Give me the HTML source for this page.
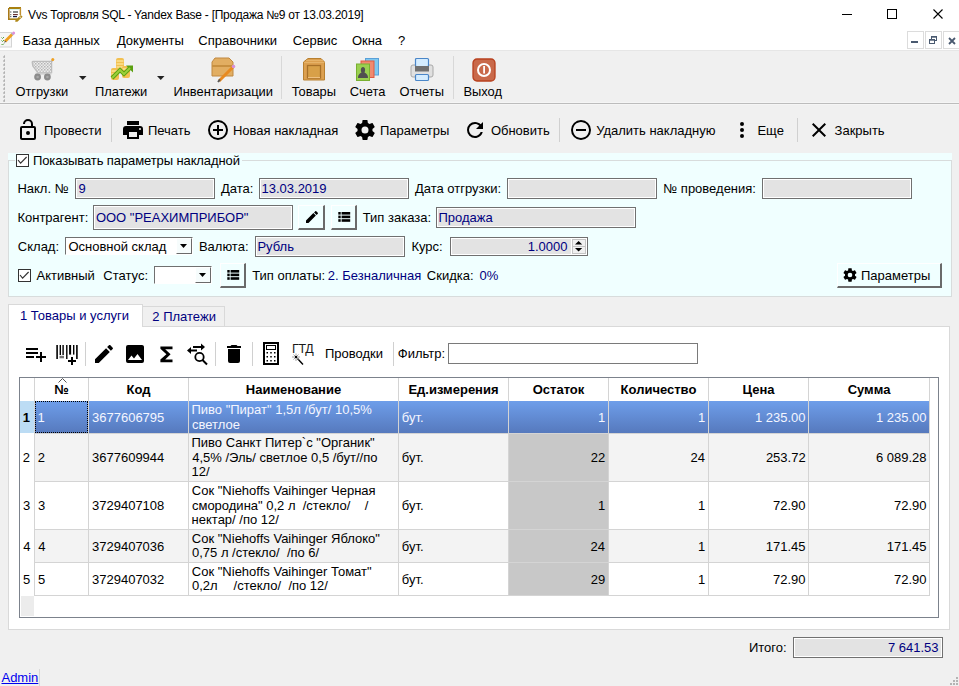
<!DOCTYPE html>
<html><head><meta charset="utf-8">
<style>
*{margin:0;padding:0;box-sizing:border-box}
html,body{width:959px;height:686px;overflow:hidden;background:#f0f0f0;font-family:"Liberation Sans",sans-serif;color:#000}
.a{position:absolute}
.t{position:absolute;white-space:nowrap;line-height:1;font-size:13px}
svg{position:absolute;overflow:visible}
</style></head><body>

<div class="a" style="left:0px;top:0px;width:959px;height:50px;background:#fff;"></div>
<svg style="left:8px;top:7px" width="15" height="15" viewBox="0 0 15 15"><rect x="0" y="0.5" width="13" height="12.5" fill="#fff"/>
<rect x="0" y="1" width="1.6" height="12" fill="#a87818"/>
<rect x="1" y="0" width="12" height="2" fill="#a88010"/>
<rect x="11.6" y="1" width="1.5" height="7" fill="#c09030"/>
<rect x="1" y="11.4" width="8" height="1.6" fill="#a88018"/>
<rect x="1.6" y="2" width="10" height="0.8" fill="#c8f0e8"/>
<rect x="2" y="4" width="1.4" height="2" fill="#aaa"/><rect x="5" y="4" width="5" height="2" fill="#888"/>
<rect x="2" y="7" width="1.4" height="1.2" fill="#888"/><rect x="5" y="7" width="4.8" height="1.2" fill="#6a3030"/>
<rect x="2" y="9" width="1.4" height="1.2" fill="#777"/><rect x="5" y="9" width="4" height="1.2" fill="#101840"/>
<path d="M7.5 13 L12.8 8 L14.6 9.8 L9.4 14.8 L7.2 14.8 Z" fill="#b08818"/>
<rect x="11.5" y="9.6" width="1.2" height="1.2" fill="#fff"/></svg>
<div class="t" style="left:27.947265625px;top:8.84px;font-size:12px;letter-spacing:-0.25px;">Vvs Торговля SQL - Yandex Base - [Продажа №9 от 13.03.2019]</div>
<div class="a" style="left:842px;top:14px;width:10px;height:1px;background:#000;"></div>
<div class="a" style="left:887px;top:9px;width:10px;height:10px;border:1px solid #000;"></div>
<svg style="left:933px;top:9px" width="10" height="10" viewBox="0 0 10 10"><path d="M0.5 0.5 L9.5 9.5 M9.5 0.5 L0.5 9.5" stroke="#000" stroke-width="1.1"/></svg>
<svg style="left:0px;top:28px" width="16" height="22" viewBox="0 0 16 22"><rect x="-0.5" y="4.5" width="12" height="14.5" fill="#f6f6f6" stroke="#d4d4d4"/>
<path d="M1.5 9.5 l1 1 l1.5-1.5 M1.5 12.5 l1 1 l1.5-1.5 M1.5 16 l1 1 l1.5-1.5" stroke="#5aa040" stroke-width="1" fill="none"/>
<path d="M5 13.5 L12 6.5" stroke="#f0a020" stroke-width="2.8"/>
<path d="M4 14.8 L5.2 12.6 L6.3 13.7 Z" fill="#555"/>
<path d="M12 6.5 L13 5.5" stroke="#aab" stroke-width="2.8"/>
<circle cx="13.6" cy="4.9" r="1.5" fill="#e090d8"/></svg>
<div class="t" style="left:22.43359375px;top:33.99px;font-size:13px;">База данных</div>
<div class="t" style="left:116.90478515625px;top:33.99px;font-size:13px;">Документы</div>
<div class="t" style="left:198.33984375px;top:33.99px;font-size:13px;">Справочники</div>
<div class="t" style="left:292.83984375px;top:33.99px;font-size:13px;">Сервис</div>
<div class="t" style="left:351.88427734375px;top:33.99px;font-size:13px;">Окна</div>
<div class="t" style="left:397.966796875px;top:33.99px;font-size:13px;">?</div>
<div class="a" style="left:907px;top:31px;width:17px;height:18px;background:#fff;border:1px solid #dcdcdc;"></div>
<div class="a" style="left:925px;top:31px;width:17px;height:18px;background:#fff;border:1px solid #dcdcdc;"></div>
<div class="a" style="left:943px;top:31px;width:17px;height:18px;background:#fff;border:1px solid #dcdcdc;"></div>
<svg style="left:911px;top:41px" width="8" height="3" viewBox="0 0 8 3"><rect x="0" y="0" width="7" height="2" fill="#4a5a70"/></svg>
<svg style="left:929px;top:36px" width="9" height="9" viewBox="0 0 9 9"><rect x="2.5" y="0.5" width="5" height="4" fill="none" stroke="#4a5a70"/><rect x="0.5" y="3.5" width="5" height="4" fill="#fff" stroke="#4a5a70"/><rect x="0.5" y="3.5" width="5" height="1.2" fill="#4a5a70"/><rect x="2.5" y="0.5" width="5" height="1.2" fill="#4a5a70"/></svg>
<svg style="left:948px;top:37px" width="8" height="8" viewBox="0 0 8 8"><path d="M1 1 L7 7 M7 1 L1 7" stroke="#4a5a70" stroke-width="1.8"/></svg>
<div class="a" style="left:0px;top:50px;width:959px;height:1px;background:#e6e6e6;"></div>
<div class="a" style="left:0px;top:51px;width:959px;height:52px;background:#f0f0f0;"></div>
<div class="a" style="left:0px;top:102px;width:959px;height:3px;background:#f5f5f5;"></div>
<div class="a" style="left:0px;top:103px;width:959px;height:1px;background:#bcbcbc;"></div>
<svg style="left:2px;top:55px" width="4" height="48" viewBox="0 0 4 48"><rect x="2" y="0.5" width="1" height="1" fill="#c8c8c8"/><rect x="1" y="1.5" width="2" height="1" fill="#a0a0a0"/><rect x="2" y="0.5" width="1" height="2" fill="#b0b0b0"/><rect x="2" y="4.5" width="1" height="1" fill="#c8c8c8"/><rect x="1" y="5.5" width="2" height="1" fill="#a0a0a0"/><rect x="2" y="4.5" width="1" height="2" fill="#b0b0b0"/><rect x="2" y="8.5" width="1" height="1" fill="#c8c8c8"/><rect x="1" y="9.5" width="2" height="1" fill="#a0a0a0"/><rect x="2" y="8.5" width="1" height="2" fill="#b0b0b0"/><rect x="2" y="12.5" width="1" height="1" fill="#c8c8c8"/><rect x="1" y="13.5" width="2" height="1" fill="#a0a0a0"/><rect x="2" y="12.5" width="1" height="2" fill="#b0b0b0"/><rect x="2" y="16.5" width="1" height="1" fill="#c8c8c8"/><rect x="1" y="17.5" width="2" height="1" fill="#a0a0a0"/><rect x="2" y="16.5" width="1" height="2" fill="#b0b0b0"/><rect x="2" y="20.5" width="1" height="1" fill="#c8c8c8"/><rect x="1" y="21.5" width="2" height="1" fill="#a0a0a0"/><rect x="2" y="20.5" width="1" height="2" fill="#b0b0b0"/><rect x="2" y="24.5" width="1" height="1" fill="#c8c8c8"/><rect x="1" y="25.5" width="2" height="1" fill="#a0a0a0"/><rect x="2" y="24.5" width="1" height="2" fill="#b0b0b0"/><rect x="2" y="28.5" width="1" height="1" fill="#c8c8c8"/><rect x="1" y="29.5" width="2" height="1" fill="#a0a0a0"/><rect x="2" y="28.5" width="1" height="2" fill="#b0b0b0"/><rect x="2" y="32.5" width="1" height="1" fill="#c8c8c8"/><rect x="1" y="33.5" width="2" height="1" fill="#a0a0a0"/><rect x="2" y="32.5" width="1" height="2" fill="#b0b0b0"/><rect x="2" y="36.5" width="1" height="1" fill="#c8c8c8"/><rect x="1" y="37.5" width="2" height="1" fill="#a0a0a0"/><rect x="2" y="36.5" width="1" height="2" fill="#b0b0b0"/><rect x="2" y="40.5" width="1" height="1" fill="#c8c8c8"/><rect x="1" y="41.5" width="2" height="1" fill="#a0a0a0"/><rect x="2" y="40.5" width="1" height="2" fill="#b0b0b0"/><rect x="2" y="44.5" width="1" height="1" fill="#c8c8c8"/><rect x="1" y="45.5" width="2" height="1" fill="#a0a0a0"/><rect x="2" y="44.5" width="1" height="2" fill="#b0b0b0"/></svg>
<div class="a" style="left:281px;top:56px;width:1px;height:43px;background:#d8d8d8;"></div>
<div class="a" style="left:453px;top:56px;width:1px;height:43px;background:#d8d8d8;"></div>
<svg style="left:26px;top:54px" width="36" height="30" viewBox="0 0 36 30"><defs><pattern id="chk" width="3" height="3" patternUnits="userSpaceOnUse"><rect width="3" height="3" fill="#ececec"/><rect width="1.5" height="1.5" fill="#b4b4b4"/><rect x="1.5" y="1.5" width="1.5" height="1.5" fill="#c4c4c4"/></pattern></defs>
<path d="M6.2 8.2 Q6.2 7.4 7.2 7.4 H25.6 V18.6 H11.8 L6.8 12 Z" fill="url(#chk)" stroke="#bcbcbc" stroke-width="1.3"/>
<path d="M25.6 7.6 L26.6 5.6" stroke="#b0b0b0" stroke-width="1.4"/>
<circle cx="26.8" cy="5.4" r="1.5" fill="#f0a020"/>
<rect x="9.5" y="18.6" width="16" height="2" fill="#cfcfcf"/>
<circle cx="11.6" cy="23" r="3.4" fill="#8c8c8c"/><circle cx="21.4" cy="23" r="3.4" fill="#8c8c8c"/>
<circle cx="11.6" cy="23" r="1.3" fill="#a8a8a8"/><circle cx="21.4" cy="23" r="1.3" fill="#a8a8a8"/></svg>
<svg style="left:79px;top:76px" width="8" height="4" viewBox="0 0 8 4"><path d="M0 0 H7.5 L3.75 4 Z" fill="#222"/></svg>
<svg style="left:108px;top:56px" width="26" height="26" viewBox="0 0 26 26"><rect x="8" y="2" width="8" height="12" rx="2" fill="#f2c050"/>
<path d="M8.5 5 H15.5 M8.5 8 H15.5 M8.5 11 H15.5" stroke="#fff2b0" stroke-width="1"/>
<rect x="3" y="12" width="8" height="12" rx="2" fill="#f2c050"/>
<path d="M3.5 15 H10.5 M3.5 18 H10.5" stroke="#fff2b0" stroke-width="1"/>
<rect x="14" y="10" width="8" height="12" rx="2" fill="#f2c050"/>
<path d="M14.5 13 H21.5" stroke="#fff2b0" stroke-width="1"/>
<path d="M4 22 L12 14 L16 18 L22 12" stroke="#5aa010" stroke-width="4" fill="none" stroke-linejoin="miter"/>
<path d="M18 9.5 H25 V16.5 Z" fill="#5aa010"/>
<path d="M4 22 L12 14 L16 18 L22 12" stroke="#9cd03a" stroke-width="2" fill="none"/></svg>
<svg style="left:157px;top:76px" width="8" height="4" viewBox="0 0 8 4"><path d="M0 0 H7.5 L3.75 4 Z" fill="#222"/></svg>
<svg style="left:210px;top:56px" width="26" height="26" viewBox="0 0 26 26"><path d="M5 2 H19 L23 6 V20 H2 V6 Z" fill="#e2ae62" stroke="#c08840" stroke-width="1"/>
<rect x="2" y="9" width="21" height="2" fill="#c89040"/>
<path d="M9 25 L23 11" stroke="#e88a20" stroke-width="3"/>
<path d="M8 26 L10 23.5" stroke="#555" stroke-width="2"/>
<circle cx="23.5" cy="10.5" r="1.8" fill="#d890d8"/></svg>
<svg style="left:302px;top:56px" width="26" height="26" viewBox="0 0 26 26"><path d="M6 2.5 H19 L22.5 6 V24 H1.5 V6 Z" fill="#dca050" stroke="#b88030" stroke-width="1"/>
<path d="M4 4.5 H21 M2 6.5 H22.5" stroke="#e8b870" stroke-width="0.8"/>
<rect x="5.5" y="9.5" width="13" height="12.5" fill="#d8a048" stroke="#a87028" stroke-width="1.3"/>
<path d="M6 21.5 H18" stroke="#eec080" stroke-width="1"/></svg>
<svg style="left:355px;top:56px" width="26" height="26" viewBox="0 0 26 26"><rect x="10.5" y="2.5" width="13" height="16.5" fill="#7ec8f0" stroke="#5aa0d8"/>
<rect x="6" y="5" width="13" height="16.5" fill="#f08a70" stroke="#e05a40"/>
<rect x="1.5" y="8" width="13" height="16.5" fill="#9ad050" stroke="#78b030"/>
<path d="M8 11 C5.5 11 5.5 15 6.5 16.5 C4 18 3 19 3 22 H13 C13 19 12 18 9.5 16.5 C10.5 15 10.5 11 8 11 Z" fill="#505050"/></svg>
<svg style="left:408px;top:56px" width="26" height="26" viewBox="0 0 26 26"><rect x="3" y="9" width="22" height="12" rx="2" fill="#e0e0e0" stroke="#a8a8a8"/>
<rect x="7.5" y="2.5" width="13" height="8" rx="1" fill="#d4ecff" stroke="#4a86c8" stroke-width="1.2"/>
<rect x="7" y="10" width="14" height="5.5" fill="#707070"/>
<rect x="7.5" y="18.5" width="13" height="6" rx="1" fill="#d4ecff" stroke="#4a86c8" stroke-width="1.2"/></svg>
<svg style="left:472px;top:58px" width="24" height="24" viewBox="0 0 24 24"><rect x="1" y="1" width="22" height="22" rx="4" fill="#c9694a" stroke="#b8401e" stroke-width="1.3"/>
<circle cx="12" cy="12" r="6" fill="none" stroke="#fff" stroke-width="2"/>
<rect x="11.2" y="8" width="1.8" height="7.5" fill="#fff"/></svg>
<div class="t" style="left:15.389013671875px;top:85.58px;font-size:12.9px;">Отгрузки</div>
<div class="t" style="left:94.95439453125px;top:85.58px;font-size:12.9px;">Платежи</div>
<div class="t" style="left:173.441796875px;top:85.58px;font-size:12.9px;">Инвентаризации</div>
<div class="t" style="left:291.71025390625px;top:85.58px;font-size:12.9px;">Товары</div>
<div class="t" style="left:349.844921875px;top:85.58px;font-size:12.9px;">Счета</div>
<div class="t" style="left:399.389013671875px;top:85.58px;font-size:12.9px;">Отчеты</div>
<div class="t" style="left:463.441796875px;top:85.58px;font-size:12.9px;">Выход</div>
<div class="a" style="left:111px;top:118px;width:1px;height:24px;background:#d0d0d0;"></div>
<div class="a" style="left:559px;top:118px;width:1px;height:24px;background:#d0d0d0;"></div>
<div class="a" style="left:797px;top:118px;width:1px;height:24px;background:#d0d0d0;"></div>
<svg style="left:16px;top:118px" width="24" height="24" viewBox="0 0 24 24"><path fill="#000" d="M18,20V10H6V20H18M18,8A2,2 0 0,1 20,10V20A2,2 0 0,1 18,22H6C4.89,22 4,21.1 4,20V10A2,2 0 0,1 6,8H15V6A3,3 0 0,0 12,3A3,3 0 0,0 9,6H7A5,5 0 0,1 12,1A5,5 0 0,1 17,6V8H18M12,17A2,2 0 0,1 10,15A2,2 0 0,1 12,13A2,2 0 0,1 14,15A2,2 0 0,1 12,17Z"/></svg>
<svg style="left:121px;top:118px" width="24" height="24" viewBox="0 0 24 24"><path fill="#000" d="M18,3H6V7H18M19,12A1,1 0 0,1 18,11A1,1 0 0,1 19,10A1,1 0 0,1 20,11A1,1 0 0,1 19,12M16,19H8V14H16M19,8H5A3,3 0 0,0 2,11V17H6V21H18V17H22V11A3,3 0 0,0 19,8Z"/></svg>
<svg style="left:206px;top:118px" width="24" height="24" viewBox="0 0 24 24"><path fill="#000" d="M12,20C7.59,20 4,16.41 4,12C4,7.59 7.59,4 12,4C16.41,4 20,7.59 20,12C20,16.41 16.41,20 12,20M12,2A10,10 0 0,0 2,12A10,10 0 0,0 12,22A10,10 0 0,0 22,12A10,10 0 0,0 12,2M13,7H11V11H7V13H11V17H13V13H17V11H13V7Z"/></svg>
<svg style="left:353px;top:118px" width="24" height="24" viewBox="0 0 24 24"><path fill="#000" d="M12,15.5A3.5,3.5 0 0,1 8.5,12A3.5,3.5 0 0,1 12,8.5A3.5,3.5 0 0,1 15.5,12A3.5,3.5 0 0,1 12,15.5M19.43,12.97C19.47,12.65 19.5,12.33 19.5,12C19.5,11.67 19.47,11.34 19.43,11L21.54,9.37C21.73,9.22 21.78,8.95 21.66,8.73L19.66,5.27C19.54,5.05 19.27,4.96 19.05,5.05L16.56,6.05C16.04,5.66 15.5,5.32 14.87,5.07L14.5,2.42C14.46,2.18 14.25,2 14,2H10C9.75,2 9.54,2.18 9.5,2.42L9.13,5.07C8.5,5.32 7.96,5.66 7.440,6.05L4.95,5.05C4.73,4.96 4.46,5.05 4.34,5.27L2.34,8.73C2.21,8.95 2.27,9.22 2.46,9.37L4.57,11C4.53,11.34 4.5,11.67 4.5,12C4.5,12.33 4.53,12.65 4.57,12.97L2.46,14.63C2.27,14.78 2.21,15.05 2.34,15.27L4.34,18.73C4.46,18.95 4.73,19.03 4.95,18.95L7.44,17.94C7.96,18.34 8.5,18.68 9.13,18.93L9.5,21.58C9.54,21.82 9.75,22 10,22H14C14.25,22 14.46,21.82 14.5,21.58L14.87,18.93C15.5,18.67 16.04,18.34 16.56,17.94L19.05,18.95C19.27,19.03 19.54,18.95 19.66,18.73L21.66,15.27C21.78,15.05 21.73,14.78 21.54,14.63L19.43,12.97Z"/></svg>
<svg style="left:463px;top:118px" width="24" height="24" viewBox="0 0 24 24"><path fill="#000" d="M17.65,6.35C16.2,4.9 14.21,4 12,4A8,8 0 0,0 4,12A8,8 0 0,0 12,20C15.73,20 18.84,17.45 19.73,14H17.65C16.83,16.33 14.61,18 12,18A6,6 0 0,1 6,12A6,6 0 0,1 12,6C13.66,6 15.14,6.690 16.22,7.78L13,11H20V4L17.65,6.35Z"/></svg>
<svg style="left:568.5px;top:118px" width="24" height="24" viewBox="0 0 24 24"><path fill="#000" d="M12,20C7.59,20 4,16.41 4,12C4,7.59 7.59,4 12,4C16.41,4 20,7.59 20,12C20,16.41 16.41,20 12,20M12,2A10,10 0 0,0 2,12A10,10 0 0,0 12,22A10,10 0 0,0 22,12A10,10 0 0,0 12,2M7,13H17V11H7"/></svg>
<svg style="left:730px;top:118px" width="24" height="24" viewBox="0 0 24 24"><path fill="#000" d="M12,16A2,2 0 0,1 14,18A2,2 0 0,1 12,20A2,2 0 0,1 10,18A2,2 0 0,1 12,16M12,10A2,2 0 0,1 14,12A2,2 0 0,1 12,14A2,2 0 0,1 10,12A2,2 0 0,1 12,10M12,4A2,2 0 0,1 14,6A2,2 0 0,1 12,8A2,2 0 0,1 10,6A2,2 0 0,1 12,4Z"/></svg>
<svg style="left:807px;top:118px" width="24" height="24" viewBox="0 0 24 24"><path fill="#000" d="M19,6.41L17.59,5L12,10.59L6.41,5L5,6.41L10.59,12L5,17.59L6.41,19L12,13.41L17.59,19L19,17.59L13.41,12L19,6.41Z"/></svg>
<div class="t" style="left:43.9462890625px;top:123.99px;font-size:13px;">Провести</div>
<div class="t" style="left:147.9462890625px;top:123.99px;font-size:13px;">Печать</div>
<div class="t" style="left:232.93359375px;top:123.99px;font-size:13px;">Новая накладная</div>
<div class="t" style="left:379.9462890625px;top:123.99px;font-size:13px;">Параметры</div>
<div class="t" style="left:490.88427734375px;top:123.99px;font-size:13px;">Обновить</div>
<div class="t" style="left:596.15087890625px;top:123.99px;font-size:13px;">Удалить накладную</div>
<div class="t" style="left:757.43359375px;top:123.99px;font-size:13px;">Еще</div>
<div class="t" style="left:834.57470703125px;top:123.99px;font-size:13px;">Закрыть</div>
<div class="a" style="left:8px;top:153px;width:944px;height:144px;background:#f0ffff;"></div>
<div class="a" style="left:8px;top:160px;width:944px;height:137px;border:1px solid #d8dcdc;"></div>
<div class="a" style="left:15px;top:158px;width:227px;height:4px;background:#f0ffff;"></div>
<div class="a" style="left:16px;top:154px;width:13px;height:13px;background:#fff;border:1px solid #333;"></div>
<svg style="left:16px;top:154px" width="13" height="13" viewBox="0 0 13 13"><path d="M2 6 L4.6 9.2 L10.6 3" stroke="#333" stroke-width="1.15" fill="none"/></svg>
<div class="t" style="left:32.9462890625px;top:153.99px;font-size:13px;letter-spacing:-0.1px;">Показывать параметры накладной</div>
<div class="t" style="left:17.43359375px;top:181.99px;font-size:13px;">Накл. №</div>
<div class="a" style="left:75px;top:178px;width:140px;height:21px;background:#e3e3e3;border:1px solid #707070;box-shadow:inset 1px 1px 0 #fff, inset -1px -1px 0 #fff;"></div>
<div class="t" style="left:78.390625px;top:181.99px;font-size:13px;color:#000080;">9</div>
<div class="t" style="left:220.90478515625px;top:181.99px;font-size:13px;">Дата:</div>
<div class="a" style="left:259px;top:178px;width:150px;height:21px;background:#e3e3e3;border:1px solid #707070;box-shadow:inset 1px 1px 0 #fff, inset -1px -1px 0 #fff;"></div>
<div class="t" style="left:261.509765625px;top:181.99px;font-size:13px;color:#000080;">13.03.2019</div>
<div class="t" style="left:414.90478515625px;top:181.99px;font-size:13px;">Дата отгрузки:</div>
<div class="a" style="left:507px;top:178px;width:150px;height:21px;background:#e3e3e3;border:1px solid #707070;box-shadow:inset 1px 1px 0 #fff, inset -1px -1px 0 #fff;"></div>
<div class="t" style="left:663.306640625px;top:181.99px;font-size:13px;">№ проведения:</div>
<div class="a" style="left:762px;top:178px;width:150px;height:21px;background:#e3e3e3;border:1px solid #707070;box-shadow:inset 1px 1px 0 #fff, inset -1px -1px 0 #fff;"></div>
<div class="t" style="left:17.43359375px;top:210.99px;font-size:13px;">Контрагент:</div>
<div class="a" style="left:93px;top:205px;width:200px;height:25px;background:#e3e3e3;border:1px solid #707070;box-shadow:inset 1px 1px 0 #fff, inset -1px -1px 0 #fff;"></div>
<div class="t" style="left:95.88427734375px;top:210.99px;font-size:13px;color:#000080;">ООО "РЕАХИМПРИБОР"</div>
<div class="a" style="left:298px;top:205px;width:27px;height:25px;background:#f0ffff;border-top:1px solid #fff;border-left:1px solid #fff;border-right:2px solid #6a6a6a;border-bottom:2px solid #6a6a6a;"></div>
<div class="a" style="left:331px;top:205px;width:26px;height:25px;background:#f0ffff;border-top:1px solid #fff;border-left:1px solid #fff;border-right:2px solid #6a6a6a;border-bottom:2px solid #6a6a6a;"></div>
<svg style="left:304px;top:209px" width="16" height="16" viewBox="0 0 24 24"><path d="M20.71,7.04C21.1,6.65 21.1,6 20.71,5.63L18.37,3.29C18,2.9 17.35,2.9 16.96,3.29L15.12,5.12L18.87,8.870M3,17.25V21H6.75L17.81,9.93L14.06,6.18L3,17.25Z"/></svg>
<svg style="left:338px;top:212px" width="13" height="11" viewBox="0 0 13 11"><rect x="0.3" y="0" width="2.4" height="2.6"/><rect x="3.6" y="0" width="8.6" height="2.6"/><rect x="0.3" y="3.6" width="2.4" height="2.6"/><rect x="3.6" y="3.6" width="8.6" height="2.6"/><rect x="0.3" y="7.2" width="2.4" height="2.6"/><rect x="3.6" y="7.2" width="8.6" height="2.6"/></svg>
<div class="t" style="left:362.7080078125px;top:210.99px;font-size:13px;">Тип заказа:</div>
<div class="a" style="left:436px;top:207px;width:200px;height:21px;background:#e3e3e3;border:1px solid #707070;box-shadow:inset 1px 1px 0 #fff, inset -1px -1px 0 #fff;"></div>
<div class="t" style="left:438.4462890625px;top:210.99px;font-size:13px;color:#000080;">Продажа</div>
<div class="t" style="left:17.83984375px;top:239.99px;font-size:13px;">Склад:</div>
<div class="a" style="left:65px;top:237px;width:128px;height:18px;background:#fff;border-top:1px solid #707070;border-left:1px solid #707070;border-bottom:1px solid #fff;border-right:1px solid #fff;"></div>
<div class="a" style="left:176px;top:238px;width:16px;height:16px;background:#f6fcfc;border-top:1px solid #fff;border-left:1px solid #fff;border-right:1px solid #6a6a6a;border-bottom:1px solid #6a6a6a;"></div>
<svg style="left:180px;top:244px" width="8" height="4" viewBox="0 0 8 4"><path d="M0 0 H7 L3.5 4 Z" fill="#000"/></svg>
<div class="t" style="left:68.38427734375px;top:239.99px;font-size:13px;">Основной склад</div>
<div class="t" style="left:198.93359375px;top:239.99px;font-size:13px;">Валюта:</div>
<div class="a" style="left:255px;top:236px;width:150px;height:21px;background:#e3e3e3;border:1px solid #707070;box-shadow:inset 1px 1px 0 #fff, inset -1px -1px 0 #fff;"></div>
<div class="t" style="left:257.43359375px;top:239.99px;font-size:13px;color:#000080;">Рубль</div>
<div class="t" style="left:411.43359375px;top:239.99px;font-size:13px;">Курс:</div>
<div class="a" style="left:450px;top:237px;width:138px;height:19px;background:#e3e3e3;border:1px solid #707070;box-shadow:inset 1px 1px 0 #fff, inset -1px -1px 0 #fff;"></div>
<div class="t" style="right:391.4921875px;top:239.99px;font-size:13px;color:#000080;">1.0000</div>
<div class="a" style="left:571px;top:238px;width:16px;height:17px;background:#fff;"></div>
<div class="a" style="left:572px;top:239px;width:14px;height:8px;background:#f0f0f0;border:1px solid #c4c4c4;"></div>
<div class="a" style="left:572px;top:246px;width:14px;height:8px;background:#f0f0f0;border:1px solid #c4c4c4;"></div>
<svg style="left:575px;top:241px" width="8" height="12" viewBox="0 0 8 12"><path d="M0 3.6 L3.6 0 L7.2 3.6 Z M0 7 L3.6 10.4 L7.2 7 Z" fill="#000"/></svg>
<div class="a" style="left:18px;top:269px;width:13px;height:13px;background:#fff;border:1px solid #333;"></div>
<svg style="left:18px;top:269px" width="13" height="13" viewBox="0 0 13 13"><path d="M2 6 L4.6 9.2 L10.6 3" stroke="#333" stroke-width="1.15" fill="none"/></svg>
<div class="t" style="left:36.474609375px;top:268.99px;font-size:13px;">Активный</div>
<div class="t" style="left:103.33984375px;top:268.99px;font-size:13px;">Статус:</div>
<div class="a" style="left:154px;top:266px;width:58px;height:18px;background:#fff;border-top:1px solid #707070;border-left:1px solid #707070;border-bottom:1px solid #fff;border-right:1px solid #fff;"></div>
<div class="a" style="left:195px;top:267px;width:16px;height:16px;background:#f6fcfc;border-top:1px solid #fff;border-left:1px solid #fff;border-right:1px solid #6a6a6a;border-bottom:1px solid #6a6a6a;"></div>
<svg style="left:199px;top:273px" width="8" height="4" viewBox="0 0 8 4"><path d="M0 0 H7 L3.5 4 Z" fill="#000"/></svg>
<div class="a" style="left:220px;top:263px;width:26px;height:25px;background:#f0ffff;border-top:1px solid #fff;border-left:1px solid #fff;border-right:2px solid #6a6a6a;border-bottom:2px solid #6a6a6a;"></div>
<svg style="left:227px;top:270px" width="13" height="11" viewBox="0 0 13 11"><rect x="0.3" y="0" width="2.4" height="2.6"/><rect x="3.6" y="0" width="8.6" height="2.6"/><rect x="0.3" y="3.6" width="2.4" height="2.6"/><rect x="3.6" y="3.6" width="8.6" height="2.6"/><rect x="0.3" y="7.2" width="2.4" height="2.6"/><rect x="3.6" y="7.2" width="8.6" height="2.6"/></svg>
<div class="t" style="left:252.2080078125px;top:268.99px;font-size:13px;">Тип оплаты:</div>
<div class="t" style="left:327.84619140625px;top:268.99px;font-size:13px;color:#000080;">2. Безналичная</div>
<div class="t" style="left:426.83984375px;top:268.99px;font-size:13px;">Скидка:</div>
<div class="t" style="left:479.4921875px;top:268.99px;font-size:13px;color:#000080;">0%</div>
<div class="a" style="left:837px;top:263px;width:105px;height:25px;background:#f0ffff;border-top:1px solid #fff;border-left:1px solid #fff;border-right:2px solid #6a6a6a;border-bottom:2px solid #6a6a6a;"></div>
<svg style="left:842px;top:267px" width="16" height="16" viewBox="0 0 24 24"><path d="M12,15.5A3.5,3.5 0 0,1 8.5,12A3.5,3.5 0 0,1 12,8.5A3.5,3.5 0 0,1 15.5,12A3.5,3.5 0 0,1 12,15.5M19.43,12.97C19.47,12.65 19.5,12.33 19.5,12C19.5,11.67 19.47,11.34 19.43,11L21.54,9.37C21.73,9.22 21.78,8.95 21.66,8.73L19.66,5.27C19.54,5.05 19.27,4.96 19.05,5.05L16.56,6.05C16.04,5.66 15.5,5.32 14.87,5.07L14.5,2.42C14.46,2.18 14.25,2 14,2H10C9.75,2 9.54,2.18 9.5,2.42L9.13,5.07C8.5,5.32 7.96,5.66 7.440,6.05L4.95,5.05C4.73,4.96 4.46,5.05 4.34,5.27L2.34,8.73C2.21,8.95 2.27,9.22 2.46,9.37L4.57,11C4.53,11.34 4.5,11.67 4.5,12C4.5,12.33 4.53,12.65 4.57,12.97L2.46,14.63C2.27,14.78 2.21,15.05 2.34,15.27L4.34,18.73C4.46,18.95 4.73,19.03 4.95,18.95L7.44,17.94C7.96,18.34 8.5,18.68 9.13,18.93L9.5,21.58C9.54,21.82 9.75,22 10,22H14C14.25,22 14.46,21.82 14.5,21.58L14.87,18.93C15.5,18.67 16.04,18.34 16.56,17.94L19.05,18.95C19.27,19.03 19.54,18.95 19.66,18.73L21.66,15.27C21.78,15.05 21.73,14.78 21.54,14.63L19.43,12.97Z"/></svg>
<div class="t" style="left:860.9462890625px;top:268.99px;font-size:13px;">Параметры</div>
<div class="a" style="left:8px;top:326px;width:942px;height:304px;background:#fff;border:1px solid #d9d9d9;"></div>
<div class="a" style="left:8px;top:304px;width:135px;height:23px;background:#fff;border:1px solid #d9d9d9;border-bottom:none;"></div>
<div class="a" style="left:142px;top:306px;width:83px;height:21px;background:#f0f0f0;border:1px solid #d9d9d9;"></div>
<div class="a" style="left:9px;top:326px;width:133px;height:1px;background:#fff;"></div>
<div class="t" style="left:20.009765625px;top:309.49px;font-size:13px;color:#000080;">1 Товары и услуги</div>
<div class="t" style="left:152.34619140625px;top:309.99px;font-size:13px;color:#000080;">2 Платежи</div>
<svg style="left:24px;top:342px" width="24" height="24" viewBox="0 0 24 24"><path fill="#000" d="M2,16H10V14H2M18,14V10H16V14H12V16H16V20H18V16H22V14M14,6H2V8H14M14,10H2V12H14V10Z"/></svg>
<svg style="left:52px;top:340px" width="30" height="28" viewBox="0 0 30 28"><rect x="4.3" y="5" width="1.6" height="14"/><rect x="7.6" y="5" width="1.4" height="10"/><rect x="10.4" y="5" width="1.4" height="10"/>
<rect x="14.1" y="5" width="1.4" height="14"/><rect x="17.1" y="5" width="2" height="9.6"/><rect x="21" y="5" width="1.4" height="9.6"/>
<rect x="24.1" y="5" width="1.6" height="14"/>
<rect x="7.5" y="15.8" width="4.5" height="2.5" fill="#777"/>
<path d="M20 17 V25 M16 21 H24" stroke="#000" stroke-width="2"/></svg>
<div class="a" style="left:85px;top:342px;width:1px;height:24px;background:#d0d0d0;"></div>
<div class="a" style="left:215px;top:342px;width:1px;height:24px;background:#d0d0d0;"></div>
<div class="a" style="left:252px;top:342px;width:1px;height:24px;background:#d0d0d0;"></div>
<div class="a" style="left:393px;top:342px;width:1px;height:24px;background:#d0d0d0;"></div>
<svg style="left:92px;top:342px" width="24" height="24" viewBox="0 0 24 24"><path fill="#000" d="M20.71,7.04C21.1,6.65 21.1,6 20.71,5.63L18.37,3.29C18,2.9 17.35,2.9 16.96,3.29L15.12,5.12L18.87,8.870M3,17.25V21H6.75L17.81,9.93L14.06,6.18L3,17.25Z"/></svg>
<svg style="left:123px;top:342px" width="24" height="24" viewBox="0 0 24 24"><path fill="#000" d="M21,19V5C21,3.89 20.1,3 19,3H5A2,2 0 0,0 3,5V19A2,2 0 0,0 5,21H19A2,2 0 0,0 21,19M8.5,13.5L11,16.51L14.5,12L19,18H5L8.5,13.5Z"/></svg>
<svg style="left:159.5px;top:345.5px" width="14" height="17" viewBox="0 0 14 17"><path d="M0.4 0.4 H12.5 V3.2 H5.2 L10.6 8.2 L5.2 13.4 H12.5 V16.2 H0.4 V13.6 L6.4 8.2 L0.4 2.8 Z" fill="#000"/></svg>
<svg style="left:186px;top:343px" width="22" height="22" viewBox="0 0 22 22"><path d="M7 4 H17" stroke="#000" stroke-width="2"/><path d="M15 0.5 L19 4 L15 7.5 Z" fill="#000"/>
<path d="M5 7.5 H11" stroke="#000" stroke-width="2"/><path d="M5 4 L1 7.5 L5 11 Z" fill="#000"/>
<circle cx="13.5" cy="14" r="4.2" fill="none" stroke="#000" stroke-width="1.8"/>
<path d="M16.5 17 L21 21.5" stroke="#000" stroke-width="2"/></svg>
<svg style="left:222px;top:342px" width="24" height="24" viewBox="0 0 24 24"><path fill="#000" d="M19,4H15.5L14.5,3H9.5L8.5,4H5V6H19M6,19A2,2 0 0,0 8,21H16A2,2 0 0,0 18,19V7H6V19Z"/></svg>
<svg style="left:263px;top:342px" width="16" height="23" viewBox="0 0 16 23"><rect x="1" y="1" width="14" height="21" fill="#fff" stroke="#000" stroke-width="2"/>
<rect x="3.5" y="3.5" width="9" height="4" fill="none" stroke="#000" stroke-width="1"/>
<g fill="#000"><rect x="3.5" y="10" width="1.5" height="1.5"/><rect x="7.25" y="10" width="1.5" height="1.5"/><rect x="11" y="10" width="1.5" height="1.5"/>
<rect x="3.5" y="14" width="1.5" height="1.5"/><rect x="7.25" y="14" width="1.5" height="1.5"/><rect x="11" y="14" width="1.5" height="1.5"/>
<rect x="3.5" y="18" width="1.5" height="1.5"/><rect x="7.25" y="18" width="1.5" height="1.5"/><rect x="11" y="18" width="1.5" height="1.5"/></g></svg>
<div class="t" style="left:291.974609375px;top:342.62px;font-size:12.5px;color:#1a1a1a;letter-spacing:-0.3px;">ГТД</div>
<svg style="left:288px;top:351.5px" width="18" height="14" viewBox="0 0 18 14"><path d="M9 6 L15 12.5" stroke="#000" stroke-width="1.4"/>
<path d="M8 1.5 V9 M4 5 H12 M5.5 2.5 L10.5 7.5 M10.5 2.5 L5.5 7.5" stroke="#999" stroke-width="0.9"/>
<rect x="7" y="4" width="2" height="2" fill="#000"/></svg>
<div class="t" style="left:324.9462890625px;top:347.49px;font-size:13px;">Проводки</div>
<div class="t" style="left:397.7509765625px;top:347.49px;font-size:13px;">Фильтр:</div>
<div class="a" style="left:448px;top:343px;width:250px;height:21px;background:#fff;border:1px solid #7a7a7a;"></div>
<div class="a" style="left:19px;top:377px;width:920px;height:241px;background:#fff;border:1px solid #7c828c;"></div>
<div class="a" style="left:20px;top:401px;width:14px;height:32px;background:#bcdcf4;"></div>
<div class="a" style="left:34px;top:401px;width:895px;height:32px;background:linear-gradient(#6e9eea,#5679bd);"></div>
<div class="a" style="left:34px;top:433px;width:895px;height:48px;background:#f3f3f3;"></div>
<div class="a" style="left:508px;top:433px;width:100px;height:48px;background:#c8c8c8;"></div>
<div class="a" style="left:34px;top:481px;width:895px;height:48px;background:#fff;"></div>
<div class="a" style="left:508px;top:481px;width:100px;height:48px;background:#c8c8c8;"></div>
<div class="a" style="left:34px;top:529px;width:895px;height:33px;background:#f3f3f3;"></div>
<div class="a" style="left:508px;top:529px;width:100px;height:33px;background:#c8c8c8;"></div>
<div class="a" style="left:34px;top:562px;width:895px;height:33px;background:#fff;"></div>
<div class="a" style="left:508px;top:562px;width:100px;height:33px;background:#c8c8c8;"></div>
<div class="a" style="left:21px;top:596px;width:13px;height:20px;background:#ececec;"></div>
<div class="a" style="left:34px;top:378px;width:1px;height:218px;background:#d4d4d4;"></div>
<div class="a" style="left:88px;top:378px;width:1px;height:218px;background:#d4d4d4;"></div>
<div class="a" style="left:188px;top:378px;width:1px;height:218px;background:#d4d4d4;"></div>
<div class="a" style="left:398px;top:378px;width:1px;height:218px;background:#d4d4d4;"></div>
<div class="a" style="left:508px;top:378px;width:1px;height:218px;background:#d4d4d4;"></div>
<div class="a" style="left:608px;top:378px;width:1px;height:218px;background:#d4d4d4;"></div>
<div class="a" style="left:708px;top:378px;width:1px;height:218px;background:#d4d4d4;"></div>
<div class="a" style="left:808px;top:378px;width:1px;height:218px;background:#d4d4d4;"></div>
<div class="a" style="left:929px;top:378px;width:1px;height:218px;background:#d4d4d4;"></div>
<div class="a" style="left:34px;top:433px;width:896px;height:1px;background:#d4d4d4;"></div>
<div class="a" style="left:34px;top:481px;width:896px;height:1px;background:#d4d4d4;"></div>
<div class="a" style="left:34px;top:529px;width:896px;height:1px;background:#d4d4d4;"></div>
<div class="a" style="left:34px;top:562px;width:896px;height:1px;background:#d4d4d4;"></div>
<div class="a" style="left:34px;top:595px;width:896px;height:1px;background:#d4d4d4;"></div>
<div class="a" style="left:20px;top:401px;width:14px;height:0px;background:#d4d4d4;"></div>
<div class="t" style="left:-138.5px;width:400px;text-align:center;top:383.49px;font-size:13px;font-weight:bold;">№</div>
<div class="t" style="left:-61.5px;width:400px;text-align:center;top:383.49px;font-size:13px;font-weight:bold;">Код</div>
<div class="t" style="left:93.5px;width:400px;text-align:center;top:383.49px;font-size:13px;font-weight:bold;">Наименование</div>
<div class="t" style="left:253.5px;width:400px;text-align:center;top:383.49px;font-size:13px;font-weight:bold;">Ед.измерения</div>
<div class="t" style="left:358.5px;width:400px;text-align:center;top:383.49px;font-size:13px;font-weight:bold;">Остаток</div>
<div class="t" style="left:458.5px;width:400px;text-align:center;top:383.49px;font-size:13px;font-weight:bold;">Количество</div>
<div class="t" style="left:558.5px;width:400px;text-align:center;top:383.49px;font-size:13px;font-weight:bold;">Цена</div>
<div class="t" style="left:669.0px;width:400px;text-align:center;top:383.49px;font-size:13px;font-weight:bold;">Сумма</div>
<svg style="left:58px;top:378px" width="9" height="5" viewBox="0 0 9 5"><path d="M0.5 4.5 L4.5 0.5 L8.5 4.5" stroke="#555" stroke-width="1" fill="none"/></svg>
<div class="a" style="left:35px;top:401px;width:53px;height:32px;border:1px dotted #000;"></div>
<div class="t" style="left:22.68115234375px;top:411.29px;font-size:13px;font-weight:bold;">1</div>
<div class="t" style="left:37.509765625px;top:411.29px;font-size:13px;color:#f4f6ff;">1</div>
<div class="t" style="left:92.0048828125px;top:411.29px;font-size:13px;color:#f4f6ff;">3677606795</div>
<div class="t" style="left:191.4462890625px;top:403.21px;font-size:13px;color:#f4f6ff;">Пиво "Пират" 1,5л /бут/ 10,5%</div>
<div class="t" style="left:191.94775390625px;top:417.96px;font-size:13px;color:#f4f6ff;">светлое</div>
<div class="t" style="left:401.73828125px;top:411.29px;font-size:13px;color:#f4f6ff;">бут.</div>
<div class="t" style="right:353.865234375px;top:411.29px;font-size:13px;color:#f4f6ff;">1</div>
<div class="t" style="right:253.865234375px;top:411.29px;font-size:13px;color:#f4f6ff;">1</div>
<div class="t" style="right:153.4921875px;top:411.29px;font-size:13px;color:#f4f6ff;">1 235.00</div>
<div class="t" style="right:32.4921875px;top:411.29px;font-size:13px;color:#f4f6ff;">1 235.00</div>
<div class="t" style="left:22.84619140625px;top:451.29px;font-size:13px;">2</div>
<div class="t" style="left:37.84619140625px;top:451.29px;font-size:13px;color:#000;">2</div>
<div class="t" style="left:92.0048828125px;top:451.29px;font-size:13px;color:#000;">3677609944</div>
<div class="t" style="left:191.4462890625px;top:435.84px;font-size:13px;color:#000;">Пиво Санкт Питер`с "Органик"</div>
<div class="t" style="left:192.20166015625px;top:450.59px;font-size:13px;color:#000;">4,5% /Эль/ светлое 0,5 /бут//по</div>
<div class="t" style="left:191.509765625px;top:465.34px;font-size:13px;color:#000;">12/</div>
<div class="t" style="left:401.73828125px;top:451.29px;font-size:13px;color:#000;">бут.</div>
<div class="t" style="right:353.84619140625px;top:451.29px;font-size:13px;color:#000;">22</div>
<div class="t" style="right:254.119140625px;top:451.29px;font-size:13px;color:#000;">24</div>
<div class="t" style="right:153.34619140625px;top:451.29px;font-size:13px;color:#000;">253.72</div>
<div class="t" style="right:32.43505859375px;top:451.29px;font-size:13px;color:#000;">6 089.28</div>
<div class="t" style="left:23.0048828125px;top:499.29px;font-size:13px;">3</div>
<div class="t" style="left:38.0048828125px;top:499.29px;font-size:13px;color:#000;">3</div>
<div class="t" style="left:92.0048828125px;top:499.29px;font-size:13px;color:#000;">3729407108</div>
<div class="t" style="left:191.83984375px;top:483.84px;font-size:13px;color:#000;">Сок "Niehoffs Vaihinger Черная</div>
<div class="t" style="left:191.94775390625px;top:498.59px;font-size:13px;color:#000;">смородина" 0,2 л&nbsp; /стекло/&nbsp;&nbsp;&nbsp; /</div>
<div class="t" style="left:191.5986328125px;top:513.34px;font-size:13px;color:#000;">нектар/ /по 12/</div>
<div class="t" style="left:401.73828125px;top:499.29px;font-size:13px;color:#000;">бут.</div>
<div class="t" style="right:353.865234375px;top:499.29px;font-size:13px;color:#000;">1</div>
<div class="t" style="right:253.865234375px;top:499.29px;font-size:13px;color:#000;">1</div>
<div class="t" style="right:153.4921875px;top:499.29px;font-size:13px;color:#000;">72.90</div>
<div class="t" style="right:32.4921875px;top:499.29px;font-size:13px;color:#000;">72.90</div>
<div class="t" style="left:23.20166015625px;top:539.79px;font-size:13px;">4</div>
<div class="t" style="left:38.20166015625px;top:539.79px;font-size:13px;color:#000;">4</div>
<div class="t" style="left:92.0048828125px;top:539.79px;font-size:13px;color:#000;">3729407036</div>
<div class="t" style="left:191.83984375px;top:531.71px;font-size:13px;color:#000;">Сок "Niehoffs Vaihinger Яблоко"</div>
<div class="t" style="left:191.9921875px;top:546.46px;font-size:13px;color:#000;">0,75 л /стекло/&nbsp; /по 6/</div>
<div class="t" style="left:401.73828125px;top:539.79px;font-size:13px;color:#000;">бут.</div>
<div class="t" style="right:354.119140625px;top:539.79px;font-size:13px;color:#000;">24</div>
<div class="t" style="right:253.865234375px;top:539.79px;font-size:13px;color:#000;">1</div>
<div class="t" style="right:153.4541015625px;top:539.79px;font-size:13px;color:#000;">171.45</div>
<div class="t" style="right:32.4541015625px;top:539.79px;font-size:13px;color:#000;">171.45</div>
<div class="t" style="left:22.9794921875px;top:572.79px;font-size:13px;">5</div>
<div class="t" style="left:37.9794921875px;top:572.79px;font-size:13px;color:#000;">5</div>
<div class="t" style="left:92.0048828125px;top:572.79px;font-size:13px;color:#000;">3729407032</div>
<div class="t" style="left:191.83984375px;top:564.71px;font-size:13px;color:#000;">Сок "Niehoffs Vaihinger Томат"</div>
<div class="t" style="left:191.9921875px;top:579.46px;font-size:13px;color:#000;">0,2л&nbsp;&nbsp;&nbsp;<span style="margin-left:1.5px"></span> /стекло/&nbsp; /по 12/</div>
<div class="t" style="left:401.73828125px;top:572.79px;font-size:13px;color:#000;">бут.</div>
<div class="t" style="right:353.88427734375px;top:572.79px;font-size:13px;color:#000;">29</div>
<div class="t" style="right:253.865234375px;top:572.79px;font-size:13px;color:#000;">1</div>
<div class="t" style="right:153.4921875px;top:572.79px;font-size:13px;color:#000;">72.90</div>
<div class="t" style="right:32.4921875px;top:572.79px;font-size:13px;color:#000;">72.90</div>
<div class="t" style="left:748.93359375px;top:640.99px;font-size:13px;">Итого:</div>
<div class="a" style="left:793px;top:637px;width:150px;height:21px;background:#e3e3e3;border:1px solid #707070;box-shadow:inset 1px 1px 0 #fff, inset -1px -1px 0 #fff;"></div>
<div class="t" style="right:20.4287109375px;top:640.99px;font-size:13px;color:#000080;">7 641.53</div>
<div class="t" style="left:1.474609375px;top:670.99px;font-size:13px;color:#0000ee;text-decoration:underline;">Admin</div>
<div class="a" style="left:39px;top:669px;width:1px;height:17px;background:#d8d8d8;"></div>
<div class="a" style="left:956px;top:677px;width:2px;height:2px;background:#b4b4b4;"></div>
<div class="a" style="left:953px;top:680px;width:2px;height:2px;background:#b4b4b4;"></div>
<div class="a" style="left:956px;top:680px;width:2px;height:2px;background:#b4b4b4;"></div>
<div class="a" style="left:950px;top:683px;width:2px;height:2px;background:#b4b4b4;"></div>
<div class="a" style="left:953px;top:683px;width:2px;height:2px;background:#b4b4b4;"></div>
<div class="a" style="left:956px;top:683px;width:2px;height:2px;background:#b4b4b4;"></div>
</body></html>
